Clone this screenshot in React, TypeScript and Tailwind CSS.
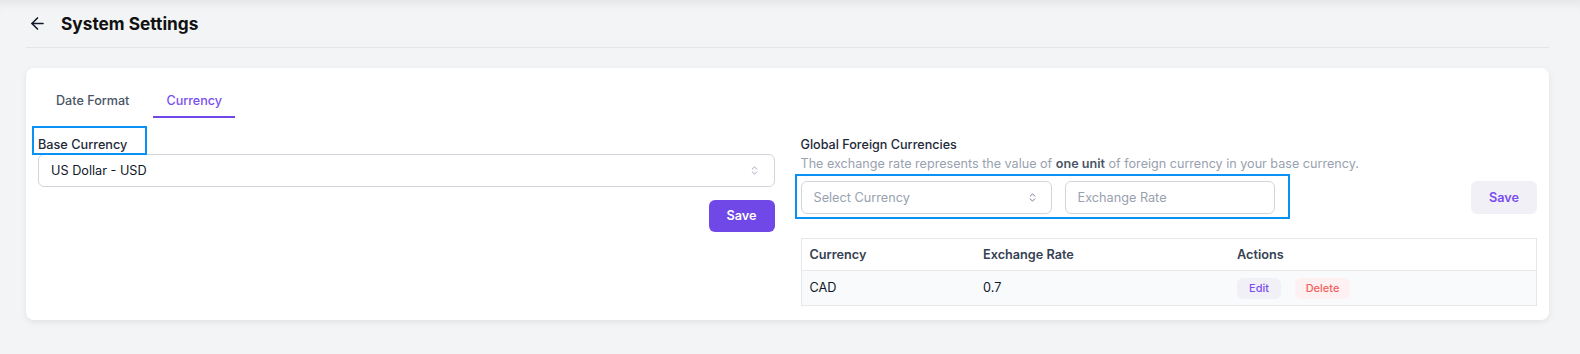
import { ArrowLeft, ChevronsUpDown } from "lucide-react";

const App = () => {
  return (
    <div className="min-h-screen bg-[#f3f4f6] pl-[26px] pr-[31px] font-['Inter',sans-serif] text-gray-900 shadow-[inset_0_10px_12px_-8px_rgba(0,0,0,0.08)]">
      {/* Header */}
      <div className="flex h-[48px] items-center gap-[14px] border-b border-[#e2e4e8] pl-[2px]">
        <ArrowLeft size={19} strokeWidth={2} className="text-gray-900" />
        <h1 className="text-[17.3px] font-bold leading-6 text-[#111]">
          System Settings
        </h1>
      </div>

      {/* Card */}
      <div className="mt-[20px] rounded-lg bg-white px-3 pb-[14px] pt-[18px] shadow-[0_2px_6px_rgba(0,0,0,0.08)]">
        {/* Tabs */}
        <div className="ml-[5px] flex gap-[11px]">
          <button className="flex h-[32px] items-center border-b-2 border-transparent px-[13px] text-[12.6px] font-medium text-gray-600">
            Date Format
          </button>
          <button className="flex h-[32px] items-center border-b-2 border-[#7048e8] px-[13px] text-[12.6px] font-medium text-[#7b4fef]">
            Currency
          </button>
        </div>

        <div className="mt-[15px] grid grid-cols-2 gap-[26px]">
          {/* Base currency */}
          <div className="flex flex-col">
            <div className="relative self-start">
              <label className="block pt-1 text-[12.7px] font-medium leading-4 text-gray-800">
                Base Currency
              </label>
              <div className="pointer-events-none absolute left-[-6px] top-[-7px] h-[29px] w-[115px] border-2 border-[#0a91f5]" />
            </div>
            <div className="mt-[1px] flex h-[33px] items-center justify-between rounded-md border border-gray-300 pl-3 pr-[14px] text-[12.7px] text-gray-900">
              <span>US Dollar - USD</span>
              <ChevronsUpDown size={11} className="text-gray-400" />
            </div>
            <button className="mt-[13px] h-8 w-[66px] self-end rounded-md bg-[#7048e8] text-[12.7px] font-semibold text-white">
              Save
            </button>
          </div>

          {/* Foreign currencies */}
          <div className="flex flex-col">
            <h3 className="pt-[2px] text-[12.6px] font-medium leading-[19px] text-gray-800">
              Global Foreign Currencies
            </h3>
            <p className="text-[12.6px] leading-[19px] text-gray-400">
              The exchange rate represents the value of{" "}
              <span className="font-semibold text-gray-600">one unit</span> of
              foreign currency in your base currency.
            </p>
            <div className="mt-2 flex items-center justify-between">
              <div className="relative flex gap-[13px]">
                <div className="flex h-[33px] w-[251px] items-center justify-between rounded-md border border-gray-300 pl-3 pr-[13px] text-[12.7px] text-gray-400">
                  <span>Select Currency</span>
                  <ChevronsUpDown size={11} className="text-gray-500" />
                </div>
                <div className="flex h-[33px] w-[210px] items-center rounded-md border border-gray-300 px-3 text-[12.7px] text-gray-400">
                  Exchange Rate
                </div>
                <div className="pointer-events-none absolute left-[-6px] top-[-7px] h-[45px] w-[495px] border-2 border-[#0a91f5]" />
              </div>
              <button className="h-[33px] w-[66px] rounded-md bg-[#f1f0f7] text-[12.7px] font-semibold text-[#7b4fef]">
                Save
              </button>
            </div>

            <table className="mt-[24px] w-full border border-gray-200 text-left text-[12.7px]">
              <thead>
                <tr className="h-[32px] text-gray-700">
                  <th className="w-[174px] px-2 font-semibold">Currency</th>
                  <th className="w-[254px] px-2 font-semibold">Exchange Rate</th>
                  <th className="px-2 font-semibold">Actions</th>
                </tr>
              </thead>
              <tbody>
                <tr className="h-[35px] border-t border-gray-200 bg-gray-50 text-gray-900">
                  <td className="px-2">CAD</td>
                  <td className="px-2">0.7</td>
                  <td className="px-2">
                    <div className="flex gap-[14px]">
                      <button className="h-[21px] w-[44px] rounded-md bg-[#f1f0f7] text-[11px] font-medium text-[#7b4fef]">
                        Edit
                      </button>
                      <button className="h-[21px] w-[55px] rounded-md bg-[#fff1f1] text-[11px] font-medium text-[#f2625f]">
                        Delete
                      </button>
                    </div>
                  </td>
                </tr>
              </tbody>
            </table>
          </div>
        </div>
      </div>
    </div>
  );
};

export default App;
